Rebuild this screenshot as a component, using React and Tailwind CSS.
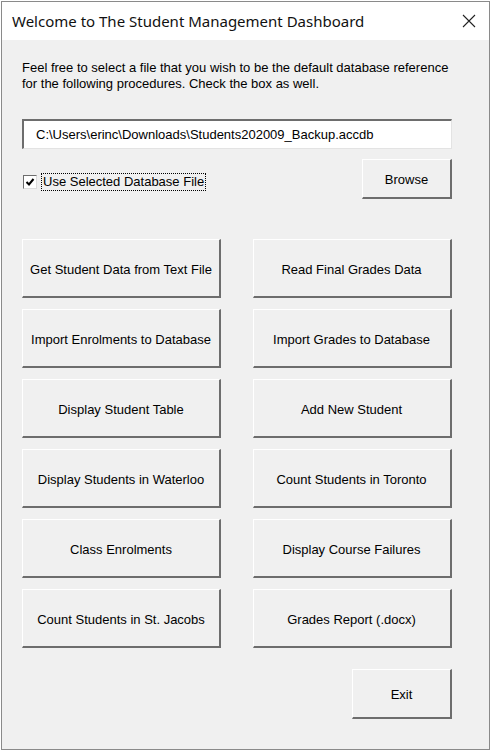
import React from "react";

const buttons = [
  ["Get Student Data from Text File", "Read Final Grades Data"],
  ["Import Enrolments to Database", "Import Grades to Database"],
  ["Display Student Table", "Add New Student"],
  ["Display Students in Waterloo", "Count Students in Toronto"],
  ["Class Enrolments", "Display Course Failures"],
  ["Count Students in St. Jacobs", "Grades Report (.docx)"],
];

const FormButton = ({ label, className = "" }) => (
  <button
    className={
      "bg-[#f0f0f0] border-t border-l border-t-white border-l-white border-r-2 border-b-2 border-r-[#6d6d6d] border-b-[#6d6d6d] text-[13px] text-black flex items-center justify-center pt-[3px] " +
      className
    }
  >
    {label}
  </button>
);

export default function App() {
  return (
    <div
      className="w-[492px] h-[751px] bg-white pt-px pl-px overflow-hidden"
      style={{ fontFamily: "'Liberation Sans', Arial, sans-serif" }}
    >
      <div className="w-[489px] h-[749px] border border-[#8a8a8a] flex flex-col">
        <div className="h-[38px] bg-white flex items-center justify-between pl-[10px] pr-[13px] shrink-0">
          <span
            className="text-[15px] text-[#111]"
            style={{ fontFamily: "'Noto Sans', sans-serif" }}
          >
            Welcome to The Student Management Dashboard
          </span>
          <svg width="14" height="14" viewBox="0 0 14 14">
            <path d="M1 1 L13 13 M13 1 L1 13" stroke="#222" strokeWidth="1.1" />
          </svg>
        </div>

        <div className="flex-1 bg-[#f0f0f0] pl-[20px] pr-[37px] pt-[20px]">
          <p className="text-[13px] leading-[16px] text-black">
            Feel free to select a file that you wish to be the default database reference
            <br />
            for the following procedures. Check the box as well.
          </p>

          <div className="mt-[27px] h-[30px] bg-white border-t-2 border-l-2 border-t-[#6d6d6d] border-l-[#6d6d6d] border-b border-r border-b-[#e3e3e3] border-r-[#e3e3e3] flex items-center pl-[12px] text-[13px]">
            C:\Users\erinc\Downloads\Students202009_Backup.accdb
          </div>

          <div className="mt-[10px] flex items-start justify-between">
            <label className="flex items-center mt-[14px] ml-px">
              <span className="w-[14px] h-[14px] bg-white border-t border-l border-t-[#6d6d6d] border-l-[#6d6d6d] border-b border-r border-b-[#dcdcdc] border-r-[#dcdcdc] flex items-center justify-center">
                <svg width="10" height="10" viewBox="0 0 10 10">
                  <path d="M1.5 5 L4 7.5 L8.5 2" stroke="#000" strokeWidth="2" fill="none" />
                </svg>
              </span>
              <span className="ml-[4px] px-px border border-dotted border-black text-[13px] leading-[16px]">
                Use Selected Database File
              </span>
            </label>
            <FormButton label="Browse" className="w-[90px] h-[40px]" />
          </div>

          <div className="mt-[40px] grid grid-cols-2 gap-x-[31px] gap-y-[11px]">
            {buttons.flat().map((b) => (
              <FormButton key={b} label={b} className="w-[199px] h-[59px]" />
            ))}
          </div>

          <div className="mt-[21px] flex justify-end">
            <FormButton label="Exit" className="w-[100px] h-[50px]" />
          </div>
        </div>
      </div>
    </div>
  );
}
